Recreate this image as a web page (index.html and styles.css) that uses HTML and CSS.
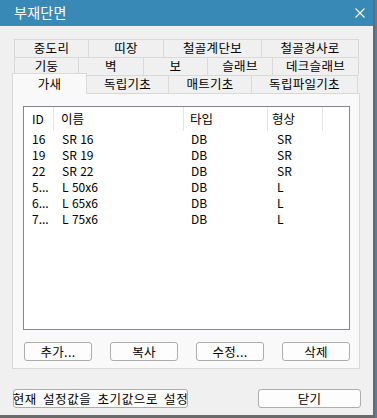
FILE: index.html
```html
<!DOCTYPE html>
<html lang="ko">
<head>
<meta charset="utf-8">
<title>부재단면</title>
<link rel="stylesheet" href="styles.css">
</head>
<body>
<div class="window">
  <div class="titlebar">
    <span class="title">부재단면</span>
    <svg class="close" width="10" height="10" viewBox="0 0 10 10"><path d="M0.5 0.5 L9.5 9.5 M9.5 0.5 L0.5 9.5" stroke="#fff" stroke-width="1.1" fill="none"/></svg>
  </div>
  <div class="content">
    <div class="tabs">
      <div class="tabrow row1">
        <div class="tab w74">중도리</div>
        <div class="tab w75">띠장</div>
        <div class="tab w98">철골계단보</div>
        <div class="tab w98 last">철골경사로</div>
      </div>
      <div class="tabrow row2">
        <div class="tab w64">기둥</div>
        <div class="tab w65">벽</div>
        <div class="tab w64">보</div>
        <div class="tab w65">슬래브</div>
        <div class="tab w87 last">데크슬래브</div>
      </div>
      <div class="tabrow row3">
        <div class="tab selected">가새</div>
        <div class="tab w82">독립기초</div>
        <div class="tab w83">매트기초</div>
        <div class="tab w107 last">독립파일기초</div>
      </div>
    </div>
    <div class="panel">
      <div class="listview">
        <div class="lv-head">
          <div class="hc c1">ID</div>
          <div class="hc c2">이름</div>
          <div class="hc c3">타입</div>
          <div class="hc c4">형상</div>
          <div class="hc c5"></div>
        </div>
        <div class="lv-row"><span class="c1">16</span><span class="c2">SR 16</span><span class="c3">DB</span><span class="c4">SR</span></div>
        <div class="lv-row"><span class="c1">19</span><span class="c2">SR 19</span><span class="c3">DB</span><span class="c4">SR</span></div>
        <div class="lv-row"><span class="c1">22</span><span class="c2">SR 22</span><span class="c3">DB</span><span class="c4">SR</span></div>
        <div class="lv-row"><span class="c1">5...</span><span class="c2">L 50x6</span><span class="c3">DB</span><span class="c4">L</span></div>
        <div class="lv-row"><span class="c1">6...</span><span class="c2">L 65x6</span><span class="c3">DB</span><span class="c4">L</span></div>
        <div class="lv-row"><span class="c1">7...</span><span class="c2">L 75x6</span><span class="c3">DB</span><span class="c4">L</span></div>
      </div>
      <div class="btnrow">
        <button class="btn small">추가...</button>
        <button class="btn small">복사</button>
        <button class="btn small">수정...</button>
        <button class="btn small">삭제</button>
      </div>
    </div>
    <div class="footer">
      <button class="btn reset">현재 설정값을 초기값으로 설정</button>
      <button class="btn closebtn">닫기</button>
    </div>
  </div>
</div>
</body>
</html>
```
FILE: styles.css
```css
* { box-sizing: border-box; }
html, body { margin: 0; padding: 0; }
body {
  background: #3889b5;
  width: 377px;
  height: 418px;
  overflow: hidden;
  font-family: "Noto Sans CJK KR", "Noto Sans", sans-serif;
  font-size: 12px;
  color: #000;
}
.window {
  width: 375px;
  height: 418px;
  background: #f0f0f0;
  border-right: 2px solid #6a6a6a;
  border-bottom: 3px solid #6a6a6a;
  display: flex;
  flex-direction: column;
}
.titlebar {
  height: 26px;
  background: #3889b5;
  border-bottom: 1px solid #6f7d87;
  display: flex;
  align-items: center;
  justify-content: space-between;
  padding: 0 8px 1px 14px;
  flex: none;
}
.title {
  color: #fff;
  font-size: 14px;
  line-height: 16px;
  letter-spacing: 0.3px;
}
.close { display: block; margin-top: 1px; }
.content {
  padding: 13px 0 0 12px;
  display: flex;
  flex-direction: column;
}
.tabs { display: flex; flex-direction: column; }
.tabrow {
  display: flex;
  height: 18px;
  padding-left: 2px;
}
.tab {
  height: 18px;
  border-top: 1px solid #d9d9d9;
  border-left: 1px solid #d9d9d9;
  background: #f0f0f0;
  display: flex;
  align-items: center;
  justify-content: center;
  font-size: 12.5px;
  line-height: 14px;
  padding-bottom: 1px;
  letter-spacing: 0.3px;
  flex: none;
}
.tab.last { border-right: 1px solid #d9d9d9; }
.w64 { width: 64px; }
.w65 { width: 65px; }
.w74 { width: 74px; }
.w75 { width: 75px; }
.w82 { width: 82px; }
.w83 { width: 83px; }
.w87 { width: 87px; }
.w98 { width: 98px; }
.w107 { width: 107px; }
.row3 { padding-left: 0; }
.tab.selected {
  width: 75px;
  height: 21px;
  margin-top: -2px;
  margin-bottom: -1px;
  margin-right: -1px;
  background: #f9f9f9;
  border-right: 1px solid #d9d9d9;
  position: relative;
  z-index: 2;
  padding-top: 1px;
  padding-bottom: 2px;
}
.panel {
  width: 348px;
  height: 276px;
  border: 1px solid #d9d9d9;
  background: #f9f9f9;
  padding: 12px 0 0 10px;
  display: flex;
  flex-direction: column;
}
.listview {
  width: 327px;
  height: 224px;
  border: 1px solid #828790;
  background: #fff;
  flex: none;
}
.lv-head {
  display: grid;
  grid-template-columns: 30px 130px 84px 55px 1fr;
  height: 24px;
}
.hc {
  border-right: 1px solid #e5e5e5;
  display: flex;
  align-items: center;
  line-height: 14px;
  font-size: 12.5px;
}
.hc.c5 { border-right: none; }
.lv-head .c1 { padding-left: 8px; font-size: 12px; }
.lv-head .c2 { padding-left: 7px; }
.lv-head .c3 { padding-left: 6px; }
.lv-head .c4 { padding-left: 4px; }
.lv-row {
  display: grid;
  grid-template-columns: 30px 130px 84px 55px;
  height: 16px;
  line-height: 16px;
}
.lv-row span { white-space: nowrap; overflow: hidden; }
.lv-row .c1 { padding-left: 8px; }
.lv-row .c2 { padding-left: 8px; }
.lv-row .c3 { padding-left: 7px; }
.lv-row .c4 { padding-left: 9px; }
.btnrow {
  display: flex;
  justify-content: space-between;
  width: 326px;
  margin: 12px 0 0 1px;
}
.btn {
  font-family: "Noto Sans CJK KR", "Noto Sans", sans-serif;
  font-size: 12.5px;
  line-height: 14px;
  letter-spacing: 0.3px;
  color: #000;
  background: #fdfdfd;
  border: 1px solid #adadad;
  border-radius: 3px;
  height: 19px;
  padding: 0;
  margin: 0;
  display: flex;
  align-items: center;
  justify-content: center;
}
.btn.small { width: 68px; }
.footer {
  display: flex;
  justify-content: space-between;
  margin-top: 20px;
  padding-left: 1px;
  width: 349px;
}
.btn.reset { width: 175px; white-space: nowrap; letter-spacing: 0.6px; word-spacing: 2px; }
.btn.closebtn { width: 103px; }
```
